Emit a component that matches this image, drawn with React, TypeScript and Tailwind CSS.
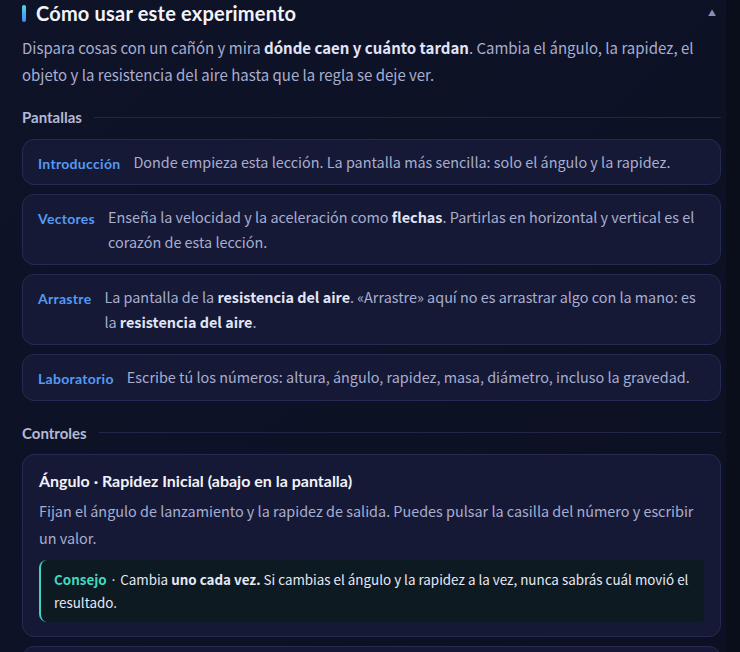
const SCREENS = [
  {
    name: "Introducción",
    body: <>Donde empieza esta lección. La pantalla más sencilla: solo el ángulo y la rapidez.</>,
  },
  {
    name: "Vectores",
    body: (
      <>
        Enseña la velocidad y la aceleración como <b className="font-bold text-[#e2e5f7]">flechas</b>. Partirlas en
        horizontal y vertical es el corazón de esta lección.
      </>
    ),
  },
  {
    name: "Arrastre",
    body: (
      <>
        La pantalla de la <b className="font-bold text-[#e2e5f7]">resistencia del aire</b>. «Arrastre» aquí no es
        arrastrar algo con la mano: es la <b className="font-bold text-[#e2e5f7]">resistencia del aire</b>.
      </>
    ),
  },
  {
    name: "Laboratorio",
    body: <>Escribe tú los números: altura, ángulo, rapidez, masa, diámetro, incluso la gravedad.</>,
  },
];

const display = "font-['Lato','Noto_Sans',sans-serif]";
const text = "font-['Noto_Sans_CJK_KR','Noto_Sans',sans-serif]";

function SectionLabel({ children }: { children: React.ReactNode }) {
  return (
    <div className="flex items-center gap-3">
      <span className={`${display} text-[15px] font-bold text-[#b4b9d6]`}>{children}</span>
      <div className="h-px flex-1 bg-[#22264a]" />
    </div>
  );
}

export default function App() {
  return (
    <div className={`min-h-[652px] bg-[#0a0d1a] ${text}`}>
      <div className="w-[726px] bg-gradient-to-br from-[#0f1328] to-[#0c1022] pl-[22px] pr-[5px]">
        <div className="flex h-[26px] items-center gap-[10px]">
          <span className="h-[17px] w-[4px] rounded-full bg-gradient-to-b from-[#4fd6ea] to-[#4a86f0]" />
          <h2 className={`${display} flex-1 text-[20px] font-bold tracking-[0.2px] text-[#f3f4fb]`}>
            Cómo usar este experimento
          </h2>
          <span className="mr-[5px] text-[8px] text-[#8a90b4]">▲</span>
        </div>

        <p className="mt-[8px] pr-[20px] text-[15px] leading-[27px] text-[#a8aed0]">
          Dispara cosas con un cañón y mira <b className="font-bold text-[#e2e5f7]">dónde caen y cuánto tardan</b>.
          Cambia el ángulo, la rapidez, el objeto y la resistencia del aire hasta que la regla se deje ver.
        </p>

        <div className="mt-[18px]">
          <SectionLabel>Pantallas</SectionLabel>
        </div>

        <div className="mt-[10px] flex flex-col gap-[9px]">
          {SCREENS.map((s) => (
            <div
              key={s.name}
              className="flex gap-[13px] rounded-[12px] border border-[#262a52] bg-[#151936] px-[15px] py-[10px]"
            >
              <span
                className={`${display} shrink-0 pt-[3px] text-[14px] font-bold leading-[21px] tracking-[0.3px] text-[#559af2]`}
              >
                {s.name}
              </span>
              <p className="text-[14.4px] leading-[24.5px] text-[#a8aed0]">{s.body}</p>
            </div>
          ))}
        </div>

        <div className="mt-[21px]">
          <SectionLabel>Controles</SectionLabel>
        </div>

        <div className="mt-[10px] rounded-[12px] border border-[#262a52] bg-[#151936] px-[16px] pb-[14px] pt-[15px]">
          <h3 className={`${display} text-[16px] font-bold leading-[22px] text-[#f1f2fa]`}>
            Ángulo · Rapidez Inicial (abajo en la pantalla)
          </h3>
          <p className="mt-[5px] text-[14.4px] leading-[27px] text-[#a8aed0]">
            Fijan el ángulo de lanzamiento y la rapidez de salida. Puedes pulsar la casilla del número y escribir un
            valor.
          </p>
          <div className="mt-[9px] rounded-l-[8px] rounded-r-[4px] border-l-2 border-[#3fd4b8] bg-[#0d1a22] py-[8px] pl-[13px] pr-[10px] text-[13.4px] leading-[23px] text-[#e6e8f5]">
            <b className="font-bold text-[#3fd9bc]">Consejo</b> · Cambia <b className="font-bold">uno cada vez.</b> Si
            cambias el ángulo y la rapidez a la vez, nunca sabrás cuál movió el resultado.
          </div>
        </div>

        <div className="mt-[9px] h-[40px] rounded-t-[12px] border border-[#262a52] bg-[#151936]" />
      </div>
    </div>
  );
}
